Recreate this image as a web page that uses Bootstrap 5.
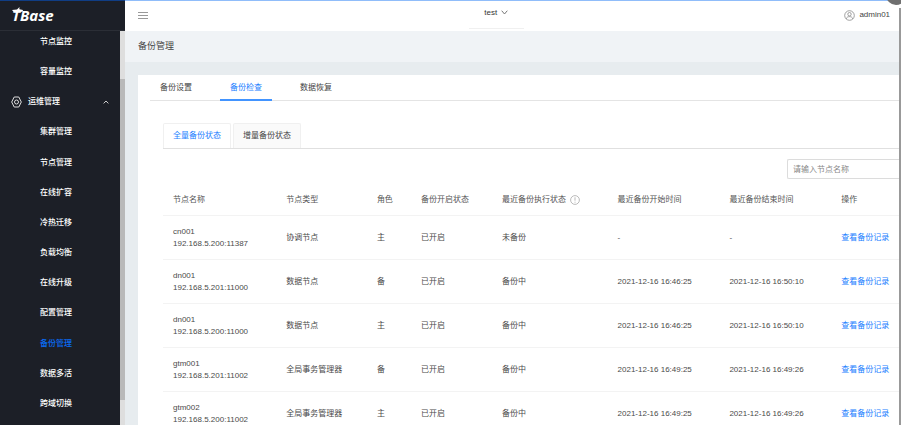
<!DOCTYPE html>
<html lang="zh-CN">
<head>
<meta charset="utf-8">
<meta name="viewport" content="width=device-width, initial-scale=1">
<title>TBase 备份管理</title>
<link href="https://cdn.jsdelivr.net/npm/bootstrap@5.3.0/dist/css/bootstrap.min.css" rel="stylesheet">
<style>
  body { font-family: "Liberation Sans", "Noto Sans CJK SC", sans-serif; font-size: 8px; line-height: 12px; color: #4a4a4a; background: #e7ecef; }
  svg { flex: none; }
  button { font-size: 8px; line-height: 12px; }
  .side { width: 125px; background: #1c1f27; border-top: 1px solid #103d84; }
  .brand { height: 30px; padding-left: 12px; border-bottom: 1px solid #2b2e36; color: #fff; font: italic bold 15px/28px "Open Sans", "Noto Sans", sans-serif; }
  .brand svg { left: 11px; top: 6px; }
  .menu { padding-bottom: 6px; }
  .menu a { color: #fff; font-weight: 500; text-decoration: none; padding-left: 40px; }
  .menu .first { flex: 0 0 26px; padding-bottom: 4px; }
  .menu .group { padding-left: 11px; padding-right: 11px; }
  .menu .group span { margin-left: 6px; }
  .menu a.current { color: #0a6cf5; }
  .track { width: 5px; background: #dedede; padding-top: 48px; padding-bottom: 25px; }
  .thumb { background: #b9b9b9; }
  .top { height: 31px; background: #fff; border-top: 1px solid #90bdfa; padding: 0 11px 2px 13px; }
  .instance { width: 55px; height: 28px; padding: 0 0 4px; border: 0; border-bottom: 1px solid #f0f0f0; background: none; color: #333; font-weight: 500; }
  .user { color: #444; }
  .title-bar { height: 31px; background: #f0f3f6; padding: 0 0 2px 13px; }
  .title-bar h1 { font-size: 9px; line-height: 12px; color: #444; }
  .panel { margin: 13px 2px 0 13px; background: #fff; padding-left: 12px; }
  .tabs { height: 26px; gap: 18px; border-bottom: 1px solid #e4e4e4; }
  .tabs button { border: 0; border-bottom: 2px solid transparent; background: none; padding: 2px 10px 0; margin-bottom: -1px; color: #444; }
  .tabs button.on { color: #1a80ff; border-color: #4294ff; }
  .inner { padding: 22px 0 0 13px; }
  .subtabs { height: 26px; gap: 2px; border-bottom: 1px solid #e0e0e0; }
  .subtabs button { border: 1px solid #f0f0f0; border-bottom: 0; border-radius: 2px 2px 0 0; background: #fafafa; padding: 0 9px; color: #444; }
  .subtabs button.on { background: #fff; color: #1a80ff; }
  .search { width: 112px; height: 20px; margin-top: 10px; padding: 0 5px; font: inherit; border: 1px solid #dcdcdc; border-right: 0; border-radius: 2px 0 0 2px; }
  .search::placeholder { color: #888; }
  .nodes { table-layout: fixed; margin: 7px 0 0; --bs-table-bg: transparent; }
  .nodes > :not(caption) > * > * { padding: 0 0 0 10px; border-bottom: 1px solid #f3f3f3; vertical-align: middle; color: #4a4a4a; white-space: nowrap; }
  .nodes thead th { height: 29px; font-weight: 400; color: #555; }
  .nodes tbody td { height: 44px; padding-top: 1px; }
  .nodes a { color: #1a80ff; text-decoration: none; }
  .c1 { width: 15.4%; } .c2 { width: 12.3%; } .c3 { width: 6%; } .c4 { width: 11%; } .c5 { width: 15.7%; } .c6 { width: 15.2%; }
  .page-scroll { width: 2px; top: 8px; background: #999; }
  .corner { top: -15px; right: -5px; width: 20px; height: 20px; background: #6f6f6f; border: 0; }
</style>
<script src="https://cdn.jsdelivr.net/npm/bootstrap@5.3.0/dist/js/bootstrap.bundle.min.js"></script>
</head>
<body class="d-flex vh-100 overflow-hidden position-relative">
<aside class="side d-flex flex-column flex-shrink-0">
  <div class="brand position-relative">TBase
    <svg class="position-absolute" width="12" height="8" viewBox="0 0 12 8" fill="#fff"><path d="M1 3 6 2.400 8.500 0 8.300 2.300 12 3 11.500 4.800H2.500Z"/></svg>
  </div>
  <div class="d-flex flex-fill">
    <nav class="menu d-flex flex-column flex-fill">
      <a class="first d-flex align-items-center" href="#">节点监控</a>
      <a class="d-flex flex-fill align-items-center" href="#">容量监控</a>
      <a class="group d-flex flex-fill align-items-center" href="#">
        <svg width="11" height="12" viewBox="0 0 11 12" fill="none" stroke="#ddd"><path d="M3.200 1h4.600L10.300 6 7.800 11H3.200L.7 6Z" stroke-linejoin="round"/><circle cx="5.500" cy="6" r="2"/></svg>
        <span>运维管理</span>
        <svg class="ms-auto" width="6" height="4" viewBox="0 0 6 4" fill="none" stroke="#ccc"><path d="M.6 3.400 3 1 5.400 3.400"/></svg>
      </a>
      <a class="d-flex flex-fill align-items-center" href="#">集群管理</a>
      <a class="d-flex flex-fill align-items-center" href="#">节点管理</a>
      <a class="d-flex flex-fill align-items-center" href="#">在线扩容</a>
      <a class="d-flex flex-fill align-items-center" href="#">冷热迁移</a>
      <a class="d-flex flex-fill align-items-center" href="#">负载均衡</a>
      <a class="d-flex flex-fill align-items-center" href="#">在线升级</a>
      <a class="d-flex flex-fill align-items-center" href="#">配置管理</a>
      <a class="current d-flex flex-fill align-items-center" href="#" aria-current="page">备份管理</a>
      <a class="d-flex flex-fill align-items-center" href="#">数据多活</a>
      <a class="d-flex flex-fill align-items-center" href="#">跨域切换</a>
    </nav>
    <div class="track d-flex flex-column"><div class="thumb flex-fill"></div></div>
  </div>
</aside>
<main class="d-flex flex-column flex-fill overflow-hidden">
  <header class="top d-flex flex-shrink-0 align-items-center justify-content-between">
    <button class="btn p-0 border-0 d-flex" type="button" aria-label="菜单"><svg width="10" height="9" viewBox="0 0 10 9" stroke="#999"><path d="M0 1.500h10M0 4.500h10M0 7.500h10"/></svg></button>
    <button class="instance d-flex align-items-center justify-content-center gap-1" type="button">test
      <svg width="7" height="5" viewBox="0 0 7 5" fill="none" stroke="#777"><path d="M.7.700 3.500 4 6.300.7"/></svg>
    </button>
    <div class="user d-flex align-items-center">
      <svg class="me-1" width="11" height="11" viewBox="0 0 11 11" fill="none" stroke="#888" stroke-width=".8"><circle cx="5.500" cy="5.500" r="4.800"/><circle cx="5.500" cy="4.200" r="1.700"/><path d="M2.300 8.800C2.500 5.900 8.500 5.900 8.700 8.800"/></svg>
      <span>admin01</span>
    </div>
  </header>
  <div class="title-bar d-flex flex-shrink-0 align-items-center"><h1 class="m-0 fw-normal">备份管理</h1></div>
  <section class="panel flex-fill overflow-hidden">
    <div class="tabs d-flex">
      <button type="button">备份设置</button>
      <button class="on" type="button">备份检查</button>
      <button type="button">数据恢复</button>
    </div>
    <div class="inner">
      <div class="subtabs d-flex">
        <button class="on" type="button">全量备份状态</button>
        <button type="button">增量备份状态</button>
      </div>
      <div class="d-flex justify-content-end"><input class="search" type="text" placeholder="请输入节点名称" aria-label="节点名称"></div>
      <table class="nodes table">
        <colgroup><col class="c1"><col class="c2"><col class="c3"><col class="c4"><col class="c5"><col class="c6"><col class="c6"><col></colgroup>
        <thead><tr><th>节点名称</th><th>节点类型</th><th>角色</th><th>备份开启状态</th>
          <th><span class="d-flex align-items-center">最近备份执行状态<svg class="ms-1" width="10" height="10" viewBox="0 0 10 10" fill="none" stroke="#aaa" stroke-width=".8"><circle cx="5" cy="5" r="4.400"/><path d="M5 2.300v3.400M5 6.700v1"/></svg></span></th>
          <th>最近备份开始时间</th><th>最近备份结束时间</th><th>操作</th></tr></thead>
        <tbody>
          <tr><td>cn001<br>192.168.5.200:11387</td><td>协调节点</td><td>主</td><td>已开启</td><td>未备份</td><td>-</td><td>-</td><td><a href="#">查看备份记录</a></td></tr>
          <tr><td>dn001<br>192.168.5.201:11000</td><td>数据节点</td><td>备</td><td>已开启</td><td>备份中</td><td>2021-12-16 16:46:25</td><td>2021-12-16 16:50:10</td><td><a href="#">查看备份记录</a></td></tr>
          <tr><td>dn001<br>192.168.5.200:11000</td><td>数据节点</td><td>主</td><td>已开启</td><td>备份中</td><td>2021-12-16 16:46:25</td><td>2021-12-16 16:50:10</td><td><a href="#">查看备份记录</a></td></tr>
          <tr><td>gtm001<br>192.168.5.201:11002</td><td>全局事务管理器</td><td>备</td><td>已开启</td><td>备份中</td><td>2021-12-16 16:49:25</td><td>2021-12-16 16:49:26</td><td><a href="#">查看备份记录</a></td></tr>
          <tr><td>gtm002<br>192.168.5.200:11002</td><td>全局事务管理器</td><td>主</td><td>已开启</td><td>备份中</td><td>2021-12-16 16:49:25</td><td>2021-12-16 16:49:26</td><td><a href="#">查看备份记录</a></td></tr>
        </tbody>
      </table>
    </div>
  </section>
</main>
<div class="page-scroll position-absolute bottom-0 end-0"></div>
<button class="corner position-absolute rounded-circle" type="button" aria-label="关闭"></button>
</body>
</html>
